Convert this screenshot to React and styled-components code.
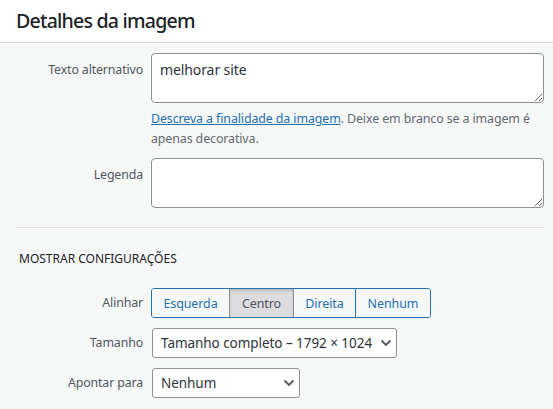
import React from "react";
import styled, { createGlobalStyle } from "styled-components";

const Global = createGlobalStyle`
  html, body { margin: 0; padding: 0; background: #f6f7f7; }
  body { font-family: "Noto Sans", "Open Sans", sans-serif; color: #1d2327; }
  * { box-sizing: border-box; }
`;

const Page = styled.div`
  width: 553px;
  height: 409px;
  overflow: hidden;
  background: #f6f7f7;
`;

const Header = styled.header`
  height: 43px;
  background: #fff;
  border-bottom: 1px solid #dcdcde;
  display: flex;
  align-items: center;
  padding: 0 16px 2px;
`;

const Title = styled.h1`
  margin: 0;
  font-size: 19.6px;
  font-weight: 500;
  color: #1d2327;
  letter-spacing: -0.8px;
`;

const Body = styled.div`
  padding: 10px 9px 0 16px;
`;

const Form = styled.div`
  display: grid;
  grid-template-columns: 127px 1fr;
  column-gap: 8px;
  align-items: start;
`;

const Label = styled.label`
  font-size: 12.4px;
  line-height: 18px;
  letter-spacing: -0.15px;
  color: #50575e;
  text-align: right;
  padding-top: ${(p) => p.$top || 8}px;
  white-space: nowrap;
`;

const TextArea = styled.textarea`
  display: block;
  width: 100%;
  height: 50px;
  border: 1px solid #8c8f94;
  border-radius: 4px;
  background: #fff;
  font-family: inherit;
  font-size: 14px;
  line-height: 18px;
  letter-spacing: -0.1px;
  color: #2c3338;
  padding: 7px 8px 6px;
  margin: 0;
  resize: vertical;
  outline: none;
`;

const Field = styled.div`
  margin-bottom: ${(p) => p.$mb || 0}px;
`;

const Help = styled.p`
  margin: 6px 0 0;
  font-size: 12.4px;
  line-height: 20px;
  letter-spacing: -0.1px;
  color: #646970;
`;

const HelpLink = styled.a`
  color: #2271b1;
  text-decoration: underline;
`;

const Divider = styled.hr`
  margin: 19px 0 0 1px;
  border: 0;
  border-top: 1px solid #dcdcde;
  border-bottom: 1px solid #fff;
  height: 0;
`;

const SectionTitle = styled.h2`
  margin: 20px 0 0 3px;
  font-size: 12px;
  font-weight: 400;
  line-height: 20px;
  color: #1d2327;
  text-transform: uppercase;
`;

const Settings = styled(Form)`
  margin-top: 19px;
  row-gap: 10px;
`;

const ButtonGroup = styled.div`
  display: inline-flex;
  border: 1px solid #2271b1;
  border-radius: 3px;
  overflow: hidden;
  height: 30px;
`;

const GroupButton = styled.button`
  font-family: inherit;
  font-size: 12.5px;
  letter-spacing: -0.1px;
  height: 100%;
  margin: 0;
  padding: 0;
  width: ${(p) => p.$w}px;
  border: 0;
  border-left: 1px solid ${(p) => (p.$pressed || p.$afterPressed ? "#8c8f94" : "#2271b1")};
  ${(p) => (p.$first ? "border-left: 0;" : "")}
  background: ${(p) => (p.$pressed ? "#dcdcde" : "#f6f7f7")};
  color: ${(p) => (p.$pressed ? "#50575e" : "#2271b1")};
  box-shadow: ${(p) => (p.$pressed ? "inset 0 2px 5px -3px rgba(0,0,0,0.5)" : "none")};
  cursor: pointer;
`;

const SelectWrap = styled.div`
  position: relative;
  width: ${(p) => p.$w}px;
  height: 30px;
  margin-left: 1px;
`;

const Select = styled.select`
  appearance: none;
  -webkit-appearance: none;
  width: 100%;
  height: 100%;
  border: 1px solid #8c8f94;
  border-radius: 3px;
  background: #fff;
  font-family: inherit;
  font-size: 13.5px;
  letter-spacing: -0.05px;
  color: #2c3338;
  padding: 0 22px 0 8px;
  margin: 0;
  outline: none;
`;

const Chevron = styled.svg`
  position: absolute;
  right: 5px;
  top: 10px;
  pointer-events: none;
`;

function ChevronIcon() {
  return (
    <Chevron width="12" height="10" viewBox="0 0 12 10">
      <path d="M1.5 2.5 L6 7 L10.5 2.5" fill="none" stroke="#50575e" strokeWidth="1.8" />
    </Chevron>
  );
}

export default function App() {
  return (
    <Page>
      <Global />
      <Header>
        <Title>Detalhes da imagem</Title>
      </Header>
      <Body>
        <Form>
          <Label $top={8}>Texto alternativo</Label>
          <Field $mb={9}>
            <TextArea defaultValue="melhorar site" />
            <Help>
              <HelpLink href="#">Descreva a finalidade da imagem</HelpLink>. Deixe em branco se a imagem é
              apenas decorativa.
            </Help>
          </Field>
          <Label $top={8}>Legenda</Label>
          <Field>
            <TextArea defaultValue="" />
          </Field>
        </Form>
        <Divider />
        <SectionTitle>Mostrar configurações</SectionTitle>
        <Settings>
          <Label $top={6}>Alinhar</Label>
          <div>
            <ButtonGroup>
              <GroupButton $first $w={77}>Esquerda</GroupButton>
              <GroupButton $pressed $w={64}>Centro</GroupButton>
              <GroupButton $afterPressed $w={62}>Direita</GroupButton>
              <GroupButton $w={75}>Nenhum</GroupButton>
            </ButtonGroup>
          </div>
          <Label $top={6}>Tamanho</Label>
          <SelectWrap $w={245}>
            <Select defaultValue="full">
              <option value="full">Tamanho completo – 1792 × 1024</option>
            </Select>
            <ChevronIcon />
          </SelectWrap>
          <Label $top={6}>Apontar para</Label>
          <SelectWrap $w={148}>
            <Select defaultValue="none">
              <option value="none">Nenhum</option>
            </Select>
            <ChevronIcon />
          </SelectWrap>
        </Settings>
      </Body>
    </Page>
  );
}
